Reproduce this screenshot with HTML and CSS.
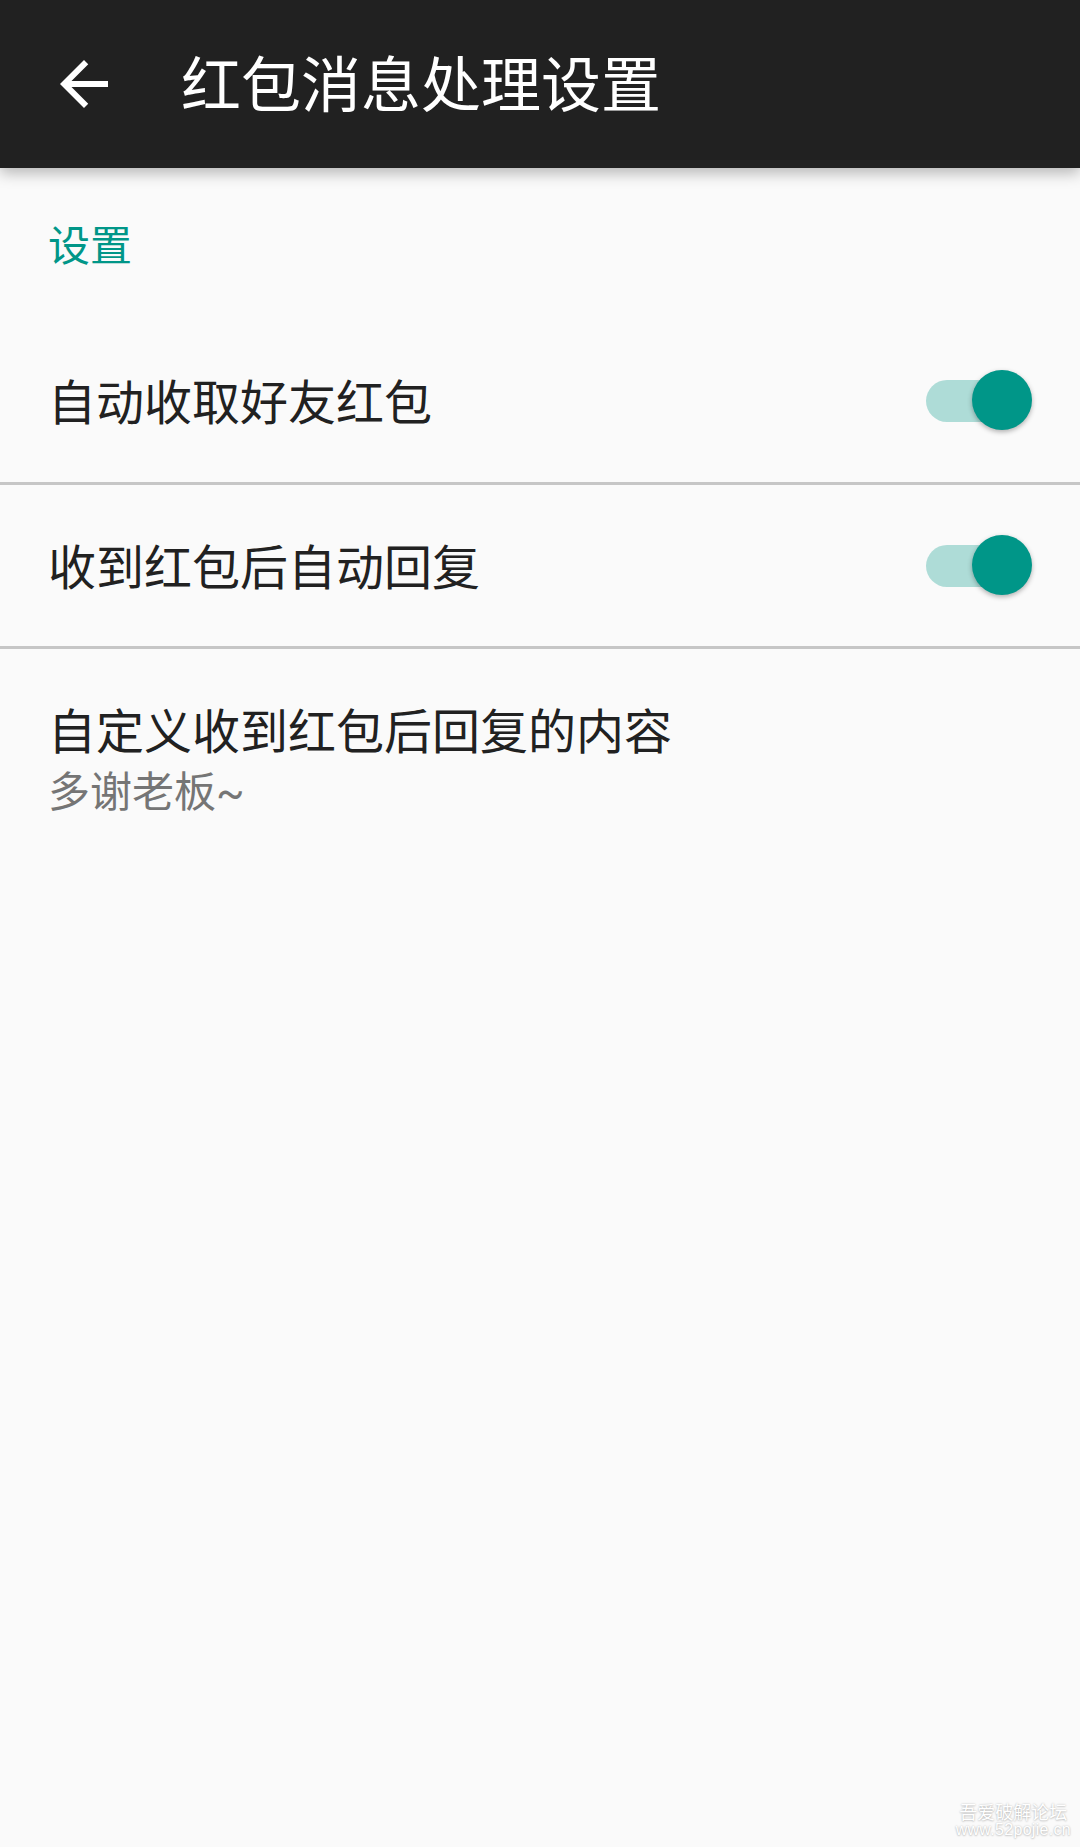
FILE: index.html
```html
<!DOCTYPE html>
<html lang="zh-CN">
<head>
<meta charset="utf-8">
<title>红包消息处理设置</title>
<link rel="stylesheet" href="styles.css">
</head>
<body>
<div class="screen">
  <header class="toolbar">
    <div class="nav-btn">
      <svg class="nav-icon" viewBox="0 0 24 24" width="72" height="72"><path fill="#ffffff" d="M20 11H7.83l5.59-5.59L12 4l-8 8 8 8 1.41-1.41L7.83 13H20v-2z"/></svg>
    </div>
    <div class="toolbar-title">红包消息处理设置</div>
  </header>
  <main class="prefs">
    <div class="category">设置</div>
    <div class="pref-row">
      <div class="pref-title">自动收取好友红包</div>
      <div class="switch"><div class="track"></div><div class="thumb"></div></div>
    </div>
    <div class="divider"></div>
    <div class="pref-row">
      <div class="pref-title">收到红包后自动回复</div>
      <div class="switch"><div class="track"></div><div class="thumb"></div></div>
    </div>
    <div class="divider"></div>
    <div class="pref-text">
      <div class="pref-title">自定义收到红包后回复的内容</div>
      <div class="pref-summary">多谢老板~</div>
    </div>
  </main>
  <div class="watermark">
    <div class="wm-cn">吾爱破解论坛</div>
    <div class="wm-url">www.52pojie.cn</div>
  </div>
</div>
</body>
</html>
```
FILE: styles.css
```css
html, body {
  margin: 0;
  padding: 0;
}
body {
  background: #fafafa;
  font-family: Roboto, "Noto Sans CJK SC", "Noto Sans", sans-serif;
}
.screen {
  position: relative;
  width: 1080px;
  height: 1847px;
  background: #fafafa;
  overflow: hidden;
}
.toolbar {
  position: relative;
  z-index: 2;
  height: 168px;
  background: #212121;
  display: flex;
  align-items: center;
  padding-left: 48px;
  box-shadow: 0 5px 14px rgba(0, 0, 0, 0.28);
}
.nav-btn {
  width: 72px;
  height: 72px;
  display: flex;
}
.nav-icon {
  display: block;
}
.toolbar-title {
  margin-left: 61px;
  padding-bottom: 7px;
  color: #ffffff;
  font-family: "Noto Sans CJK SC", sans-serif;
  font-size: 60px;
  line-height: 72px;
}
.prefs {
  display: flex;
  flex-direction: column;
}
.category {
  height: 152px;
  box-sizing: border-box;
  padding: 0 0 4px 48px;
  display: flex;
  align-items: center;
  color: #009688;
  font-family: "Noto Sans CJK SC", sans-serif;
  font-size: 42px;
}
.pref-row {
  height: 162px;
  display: flex;
  align-items: center;
  justify-content: space-between;
  padding: 0 48px;
}
.pref-row + .divider + .pref-row {
  height: 161px;
}
.pref-title {
  color: #212121;
  font-family: "Noto Sans CJK SC", sans-serif;
  font-size: 48px;
  line-height: 60px;
}
.pref-row .pref-title {
  padding-bottom: 4px;
}
.divider {
  height: 3px;
  background: #c6c6c6;
}
.pref-text {
  padding: 49px 48px 0;
}
.pref-summary {
  padding-top: 5px;
  color: #757575;
  font-family: Roboto, "Noto Sans CJK SC", sans-serif;
  font-size: 42px;
  line-height: 60px;
}
.switch {
  position: relative;
  width: 106px;
  height: 62px;
}
.track {
  position: absolute;
  left: 0;
  top: 10px;
  width: 102px;
  height: 42px;
  border-radius: 21px;
  background: #aedcd7;
}
.thumb {
  position: absolute;
  right: 0;
  top: 0;
  width: 60px;
  height: 60px;
  border-radius: 50%;
  background: #009688;
  box-shadow: 0 2px 5px rgba(0, 0, 0, 0.3);
}
.watermark {
  position: absolute;
  right: 9px;
  bottom: 8px;
  text-align: center;
  color: #ffffff;
  text-shadow: 0 0 2px rgba(0, 0, 0, 0.25), 0 1px 2px rgba(0, 0, 0, 0.15);
  font-family: "Noto Sans CJK SC", sans-serif;
}
.wm-cn {
  font-size: 18px;
  line-height: 20px;
}
.wm-url {
  font-family: "Liberation Sans", sans-serif;
  font-size: 16px;
  line-height: 18px;
  letter-spacing: 0.3px;
}
```
